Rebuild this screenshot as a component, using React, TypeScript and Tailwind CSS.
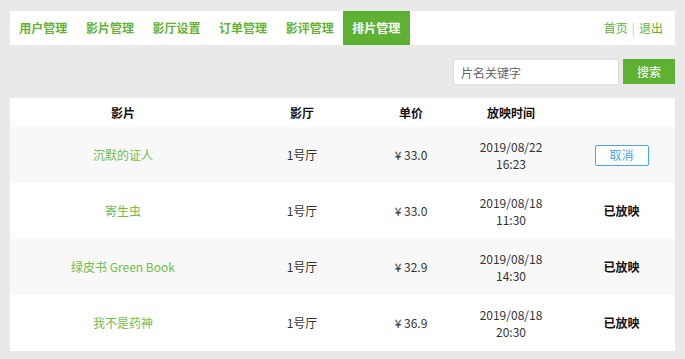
const navItems = ["用户管理", "影片管理", "影厅设置", "订单管理", "影评管理", "排片管理"];

const schedules = [
  { movie: "沉默的证人", hall: "1号厅", price: "¥ 33.0", date: "2019/08/22", time: "16:23", done: false },
  { movie: "寄生虫", hall: "1号厅", price: "¥ 33.0", date: "2019/08/18", time: "11:30", done: true },
  { movie: "绿皮书 Green Book", hall: "1号厅", price: "¥ 32.9", date: "2019/08/18", time: "14:30", done: true },
  { movie: "我不是药神", hall: "1号厅", price: "¥ 36.9", date: "2019/08/18", time: "20:30", done: true },
];

export default function App() {
  return (
    <div
      className="w-[685px] h-[359px] bg-[#e9e9e9] pt-[11px] px-[10px] overflow-hidden"
      style={{ fontFamily: '"Microsoft YaHei", "Noto Sans CJK SC", sans-serif' }}
    >
      {/* Top nav */}
      <div className="flex items-center justify-between bg-white h-[34px]">
        <div className="flex h-full">
          {navItems.map((item, i) => (
            <div
              key={item}
              className={`flex items-center justify-center w-[66.6px] h-full text-[12px] font-bold ${
                i === navItems.length - 1 ? "bg-[#5eb132] text-white" : "text-[#63b235]"
              }`}
            >
              {item}
            </div>
          ))}
        </div>
        <div className="flex items-center pr-[12px] text-[12px] text-[#63b235]">
          <span>首页</span>
          <span className="mx-[4px] text-[#c8c8c8]">|</span>
          <span>退出</span>
        </div>
      </div>

      {/* Search */}
      <div className="flex justify-end items-start mt-[14px] h-[39px]">
        <input
          placeholder="片名关键字"
          className="w-[166px] h-[26px] bg-white border border-[#dcdcdc] rounded-[2px] px-[7px] text-[12px] text-[#555] placeholder:text-[#666] outline-none"
        />
        <button className="ml-[4px] w-[52px] h-[25px] bg-[#5eb132] text-white text-[12px]">搜索</button>
      </div>

      {/* Table */}
      <table className="w-[665px] bg-white border-collapse table-fixed text-[12px] text-[#333]">
        <colgroup>
          <col className="w-[226px]" />
          <col className="w-[132px]" />
          <col className="w-[86px]" />
          <col className="w-[114px]" />
          <col className="w-[107px]" />
        </colgroup>
        <thead>
          <tr className="h-[29px] text-[#111]">
            <th className="font-bold">影片</th>
            <th className="font-bold">影厅</th>
            <th className="font-bold">单价</th>
            <th className="font-bold">放映时间</th>
            <th></th>
          </tr>
        </thead>
        <tbody>
          {schedules.map((s, i) => (
            <tr key={s.movie} className={`h-[56px] ${i % 2 === 0 ? "bg-[#f8f8f8]" : "bg-white"}`}>
              <td className="text-center text-[#74bb4c]">{s.movie}</td>
              <td className="text-center">{s.hall}</td>
              <td className="text-center">{s.price}</td>
              <td className="text-center leading-[17px]">
                <div>{s.date}</div>
                <div>{s.time}</div>
              </td>
              <td className="text-center">
                {s.done ? (
                  <span className="font-bold text-[#111]">已放映</span>
                ) : (
                  <button className="w-[54px] h-[21px] border border-[#4aa3f2] rounded-[2px] text-[#4a9ff0] text-[12px] bg-white leading-none">
                    取消
                  </button>
                )}
              </td>
            </tr>
          ))}
        </tbody>
      </table>
    </div>
  );
}
